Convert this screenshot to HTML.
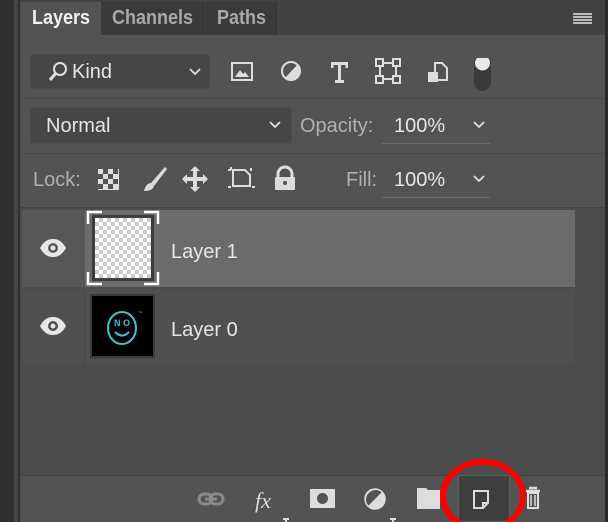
<!DOCTYPE html>
<html><head><style>
*{margin:0;padding:0;box-sizing:border-box}
body{width:608px;height:522px;background:#2f2f2f;position:relative;overflow:hidden;font-family:"Liberation Sans",sans-serif}
.a{position:absolute}
.t{color:#e6e6e6;font-size:19px}
.tab{font-weight:bold;font-size:20px;transform:scaleX(0.9);transform-origin:left top;white-space:nowrap}
</style></head><body>
<div class="a" style="left:14px;top:0;width:4px;height:522px;background:#464646"></div>
<div class="a" style="left:20px;top:0;width:585px;height:522px;background:#535353"></div>
<!-- tab bar -->
<div class="a" style="left:20px;top:0;width:585px;height:35px;background:#424242"></div>
<div class="a" style="left:101px;top:2px;width:103px;height:33px;background:#3a3a3a;border-right:1px solid #333"></div>
<div class="a" style="left:205px;top:2px;width:72px;height:33px;background:#3a3a3a;border-right:1px solid #333"></div>
<div class="a" style="left:20px;top:2px;width:81px;height:34px;background:#535353"></div>
<div class="a tab" style="left:32px;top:7px;color:#f2f2f2">Layers</div>
<div class="a tab" style="left:112px;top:7px;color:#a8a8a8">Channels</div>
<div class="a tab" style="left:217px;top:7px;color:#a8a8a8">Paths</div>
<div class="a" style="left:573px;top:13px;width:19px;height:12px;background:repeating-linear-gradient(#bbb 0 2px,transparent 2px 3px)"></div>
<!-- Kind row -->
<div class="a" style="left:30px;top:54px;width:180px;height:35px;background:#464646;border:1px solid #4d4d4d;border-radius:3px"></div>
<svg class="a" style="left:46px;top:60px" width="24" height="24"><circle cx="14" cy="9" r="6" fill="none" stroke="#e0e0e0" stroke-width="2"/><line x1="10" y1="13" x2="4" y2="20" stroke="#e0e0e0" stroke-width="3"/></svg>
<div class="a t" style="left:72px;top:61px;font-size:20px">Kind</div>
<svg class="a" style="left:188px;top:67px" width="14" height="10"><path d="M2 2l5 5 5-5" fill="none" stroke="#ddd" stroke-width="1.8"/></svg>
<svg class="a" style="left:230px;top:58px" width="270" height="34">
<rect x="2" y="5" width="20" height="17" fill="none" stroke="#ddd" stroke-width="2"/><path d="M5 19l5-7 3 4 2-2 4 5z" fill="#ddd"/>
<circle cx="61" cy="13" r="9" fill="#ddd"/><path d="M55 20L68 6A9 9 0 0 0 55 20z" fill="#535353"/><circle cx="61" cy="13" r="9" fill="none" stroke="#ddd" stroke-width="2"/>
<path d="M101 4h17v6h-2.5v-3h-4.5v15h3v3h-9v-3h3v-15h-4.5v3h-2.5z" fill="#ddd"/>
<rect x="150" y="5" width="16" height="16" fill="none" stroke="#ddd" stroke-width="2"/><rect x="146" y="1" width="7" height="7" fill="#535353" stroke="#ddd" stroke-width="2"/><rect x="163" y="1" width="7" height="7" fill="#535353" stroke="#ddd" stroke-width="2"/><rect x="146" y="18" width="7" height="7" fill="#535353" stroke="#ddd" stroke-width="2"/><rect x="163" y="18" width="7" height="7" fill="#535353" stroke="#ddd" stroke-width="2"/>
<path d="M205 5h7l5 5v12h-12z" fill="none" stroke="#ddd" stroke-width="2"/><rect x="198" y="14" width="10" height="10" fill="#ddd"/>
<rect x="244" y="-3" width="17" height="36" rx="8.5" fill="#3a3a3a"/><circle cx="252.5" cy="5" r="7.5" fill="#e8e8e8"/>
</svg>
<div class="a" style="left:20px;top:98px;width:585px;height:1px;background:#4a4a4a"></div>
<!-- Normal row -->
<div class="a" style="left:30px;top:107px;width:262px;height:37px;background:#464646;border:1px solid #4d4d4d;border-radius:3px"></div>
<div class="a t" style="left:46px;top:115px;font-size:20px">Normal</div>
<svg class="a" style="left:268px;top:120px" width="14" height="10"><path d="M2 2l5 5 5-5" fill="none" stroke="#ddd" stroke-width="1.8"/></svg>
<div class="a" style="left:300px;top:115px;font-size:20px;color:#b0b0b0">Opacity:</div>
<div class="a t" style="left:394px;top:115px;font-size:20px">100%</div>
<svg class="a" style="left:472px;top:120px" width="14" height="10"><path d="M2 2l5 5 5-5" fill="none" stroke="#ddd" stroke-width="1.8"/></svg>
<div class="a" style="left:382px;top:143px;width:108px;height:1px;background:#6b6b6b"></div>
<div class="a" style="left:20px;top:153px;width:585px;height:1px;background:#4a4a4a"></div>
<!-- Lock row -->
<div class="a" style="left:33px;top:169px;font-size:20px;color:#b0b0b0">Lock:</div>
<svg class="a" style="left:96px;top:164px" width="210" height="32">
<rect x="2" y="5" width="21" height="21" fill="#ddd"/><g fill="#535353"><rect x="7" y="5" width="5" height="5"/><rect x="17" y="5" width="5" height="5"/><rect x="2" y="10" width="5" height="5"/><rect x="12" y="10" width="5" height="5"/><rect x="7" y="15" width="5" height="5"/><rect x="17" y="15" width="5" height="5"/><rect x="2" y="20" width="5" height="5"/><rect x="12" y="20" width="5" height="5"/></g>
<path d="M69 3L55 19l3 3L71 5z" fill="#ddd"/><path d="M55 19c-4 0-6 4-7 8 4 0 9-1 10-5z" fill="#ddd"/>
<path d="M99 2l5 5h-3v6h6v-3l5 5-5 5v-3h-6v6h3l-5 5-5-5h3v-6h-6v3l-5-5 5-5v3h6v-6h-3z" fill="#ddd"/>
<path d="M137 6h12l5 5v11h-17z" fill="none" stroke="#ddd" stroke-width="2"/><g fill="#ddd"><rect x="132" y="5" width="3" height="2"/><rect x="134" y="3" width="2" height="3"/><rect x="156" y="22" width="3" height="2"/><rect x="132" y="22" width="3" height="2"/><rect x="154" y="4" width="2" height="3"/></g>
<path d="M182 13v-3a7 7 0 0 1 14 0v3" fill="none" stroke="#ddd" stroke-width="3"/><rect x="179" y="13" width="20" height="13" rx="1" fill="#ddd"/><circle cx="189" cy="19" r="2" fill="#535353"/>
</svg>
<div class="a" style="left:346px;top:169px;font-size:20px;color:#b0b0b0">Fill:</div>
<div class="a t" style="left:394px;top:169px;font-size:20px">100%</div>
<svg class="a" style="left:472px;top:174px" width="14" height="10"><path d="M2 2l5 5 5-5" fill="none" stroke="#ddd" stroke-width="1.8"/></svg>
<div class="a" style="left:382px;top:197px;width:108px;height:1px;background:#6b6b6b"></div>
<!-- list -->
<div class="a" style="left:20px;top:207px;width:585px;height:269px;background:#4c4c4c;border-top:1px solid #444"></div>
<div class="a" style="left:22px;top:210px;width:553px;height:77px;background:#575757"></div>
<div class="a" style="left:85px;top:210px;width:490px;height:77px;background:#6b6b6b"></div>
<div class="a" style="left:22px;top:289px;width:553px;height:76px;background:#505050"></div>
<div class="a" style="left:84px;top:289px;width:1px;height:76px;background:#464646"></div>
<svg class="a" style="left:38px;top:236px" width="30" height="24"><path d="M2 12C6 5 10 3 15 3s9 2 13 9c-4 7-8 9-13 9S6 19 2 12z" fill="#e6e6e6"/><circle cx="15" cy="12" r="5" fill="#575757"/><circle cx="15" cy="12" r="2.5" fill="#e6e6e6"/></svg>
<svg class="a" style="left:38px;top:314px" width="30" height="24"><path d="M2 12C6 5 10 3 15 3s9 2 13 9c-4 7-8 9-13 9S6 19 2 12z" fill="#e6e6e6"/><circle cx="15" cy="12" r="5" fill="#505050"/><circle cx="15" cy="12" r="2.5" fill="#e6e6e6"/></svg>
<!-- thumb 1 -->
<div class="a" style="left:92px;top:215px;width:62px;height:66px;background:#3c3c3c"></div>
<div class="a" style="left:95px;top:218px;width:56px;height:60px;background-color:#fff;background-image:linear-gradient(45deg,#ccc 25%,transparent 25%,transparent 75%,#ccc 75%),linear-gradient(45deg,#ccc 25%,transparent 25%,transparent 75%,#ccc 75%);background-size:8px 8px;background-position:0 0,4px 4px"></div>
<svg class="a" style="left:86px;top:210px" width="74" height="76"><path d="M2 14V2h14M58 2h14v12M72 62v12H58M16 74H2V62" fill="none" stroke="#fff" stroke-width="2.5"/></svg>
<!-- thumb 2 -->
<div class="a" style="left:90px;top:294px;width:65px;height:64px;background:#000;border:2px solid #3a3a3a"></div>
<svg class="a" style="left:90px;top:294px" width="65" height="64"><ellipse cx="32" cy="34" rx="14" ry="16" fill="none" stroke="#3cc6d4" stroke-width="2"/><text x="24" y="32" font-size="9" font-family="Liberation Sans" fill="#3cc6d4" font-weight="bold">N O</text><path d="M25 38q7 7 14 0" fill="none" stroke="#3cc6d4" stroke-width="2"/><text x="48" y="20" font-size="4" fill="#3cc6d4">™</text></svg>
<div class="a t" style="left:171px;top:241px;font-size:20px">Layer 1</div>
<div class="a t" style="left:171px;top:319px;font-size:20px">Layer 0</div>
<!-- bottom bar -->
<div class="a" style="left:20px;top:475px;width:585px;height:1px;background:#434343"></div>
<div class="a" style="left:458px;top:475px;width:52px;height:47px;background:#3e3e3e;border:1px solid #5c5c5c"></div>
<svg class="a" style="left:195px;top:480px" width="360" height="42">
<g fill="none" stroke="#8a8a8a" stroke-width="3"><rect x="4" y="14" width="13" height="10" rx="5"/><rect x="15" y="14" width="13" height="10" rx="5"/></g><line x1="10" y1="19" x2="22" y2="19" stroke="#8a8a8a" stroke-width="3"/>
<text x="60" y="28" font-size="22" font-style="italic" font-family="Liberation Serif" fill="#ddd">fx</text>
<rect x="115" y="9" width="25" height="19" fill="#ddd"/><circle cx="127.5" cy="18.5" r="5.5" fill="#535353"/>
<circle cx="180" cy="19" r="10" fill="#ddd"/><path d="M173 26L187 12A10 10 0 0 0 173 26z" fill="#535353"/><circle cx="180" cy="19" r="10" fill="none" stroke="#ddd" stroke-width="1.5"/>
<rect x="195" y="38" width="6" height="2" fill="#ddd"/><rect x="197" y="38" width="2" height="4" fill="#ddd"/>
<rect x="88" y="38" width="6" height="2" fill="#ddd"/><rect x="90" y="38" width="2" height="4" fill="#ddd"/>
<path d="M222 8h9l2 2h12v19h-23z" fill="#ddd"/>
<path d="M279 11h14v12l-5 5h-9z M288 28v-5h5" fill="none" stroke="#ddd" stroke-width="2"/>
<path d="M334 8h8M331 11h14" stroke="#ddd" stroke-width="2.5" fill="none"/><path d="M333 13h10v15h-10z" fill="none" stroke="#ddd" stroke-width="2"/><path d="M336 15v11M340 15v11" stroke="#ddd" stroke-width="1.5"/>
</svg>
<svg class="a" style="left:435px;top:452px" width="100" height="70"><ellipse cx="48" cy="44" rx="40" ry="34" fill="none" stroke="#ff0000" stroke-width="6"/></svg>
<div class="a" style="left:605px;top:0;width:3px;height:522px;background:#2a2a2a"></div>
</body></html>
